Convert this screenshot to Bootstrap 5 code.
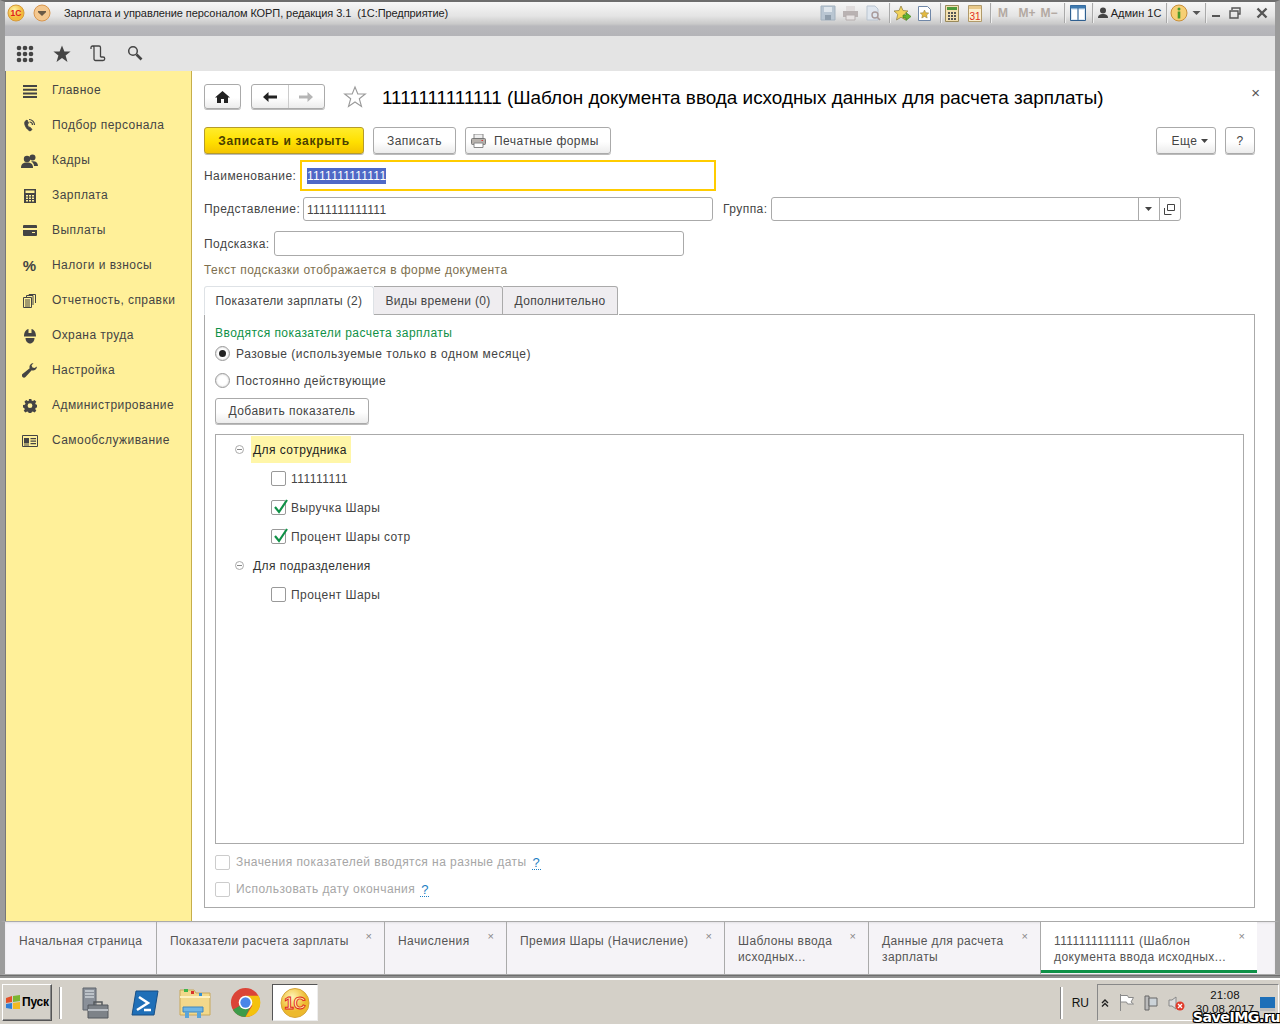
<!DOCTYPE html>
<html lang="ru"><head><meta charset="utf-8"><title>1C</title>
<link href="https://cdn.jsdelivr.net/npm/bootstrap@5.3.0/dist/css/bootstrap.min.css" rel="stylesheet">
<script src="https://cdn.jsdelivr.net/npm/bootstrap@5.3.0/dist/js/bootstrap.bundle.min.js"></script>
<style>
html,body{height:1024px;overflow:hidden;background:#d4d0c8}
body{font:12px/15px "Liberation Sans",Arial,sans-serif;letter-spacing:.45px;color:#444}
.app{height:1024px;position:relative}
.titlebar{height:36px;flex:none;border-top:2px solid #6d6d6d;background:linear-gradient(#f7f7f7 0,#e4e4e4 14px,#c9c9c9 22px,#b9b9bd 24px,#b4b4b8 100%);border-left:5px solid #9a9a9a;border-right:5px solid #9a9a9a}
.titlebar .cap{height:22px;color:#222;font-size:11px;letter-spacing:-.08px;padding-left:59px;white-space:pre}
.logo-wrap{position:absolute;left:7px;top:4px;gap:4px}
.tray{display:grid;grid-template-columns:23px 23px 22px 10px 17px 27px 4px 20px 26px 4px 22px 26px 18px 12px 16px 12px 10px 56px 4px 22px 13px 5px 16px 22px 32px;position:absolute;left:816px;top:2px;height:22px;align-items:center;justify-items:center}
.tray .sp{width:1px;height:20px;background:#a9a9a9;box-shadow:1px 0 #eee}
.tray .m{font-weight:700;font-size:12px;letter-spacing:0;color:#b3a9a2}
.tray .u{font-size:11px;letter-spacing:0;color:#222;white-space:nowrap}
.toolbar{height:35px;flex:none;background:#e4e4e4;border-left:5px solid #9a9a9a;border-right:5px solid #9a9a9a;padding-left:11px;gap:19px}
.nudge{margin-left:2px}
.workspace{flex:1 1 0;min-height:0;border-left:5px solid #9c9c9c;border-right:5px solid #9c9c9c;box-shadow:inset 1px 0 #777}
.side{width:186px;flex:none;background:#fff099;border-right:1px solid #c6ae4b;padding-top:2px;margin-left:1px}
.side .nav-link{height:35px;padding:0;color:#444;display:flex;align-items:center}
.side .ic{width:46px;display:flex;justify-content:center;flex:none;padding-left:1px;font-weight:700;font-size:15px;letter-spacing:0}
.main{flex:1 1 0;min-width:0;background:#fff;padding:13px 20px 13px 12px}
.btn.b1c{--bs-btn-padding-y:0;--bs-btn-padding-x:0;font-size:12px;letter-spacing:.45px;color:#444;border:1px solid #aaa;border-radius:3px;background:linear-gradient(#fff 0,#fff 55%,#ececec 100%);box-shadow:0 1px 0 #bbb;display:inline-flex;align-items:center;justify-content:center;line-height:15px;padding-top:1px}
.btn.yel{background:linear-gradient(#ffec2c 0,#ffe000 55%,#f4c400 100%);border-color:#b59b2b;color:#4b3f00;font-weight:700;letter-spacing:.7px}
.navrow{height:25px}
.home{width:37px;height:25px}
.navgrp{width:74px;height:25px;margin-left:10px}
.navgrp>span{flex:1;height:100%;display:flex;align-items:center;justify-content:center}
.navgrp>span+span{border-left:1px solid #ccc}
.star{margin:0 15px 0 18px;flex:none}
.title{font-size:18.9px;line-height:25px;color:#000;letter-spacing:0;white-space:nowrap;padding-top:1px}
.closex{font-size:15px;line-height:18px;color:#555;letter-spacing:0;margin-left:auto;margin-right:-5px;align-self:flex-start}
.cmd{height:27px;margin-top:18px}
.cmd .btn{height:27px}
.w160{width:160px}.w83{width:83px;margin-left:9px}.w146{width:146px;margin-left:9px;padding-right:6px}.w60{width:60px;margin-left:auto;padding-left:8px}.w30{width:30px;margin-left:9px}
.fld{color:#444;white-space:nowrap;padding-top:1px}
.form-control.i1c{height:24px;border:1px solid #aaa;border-radius:3px;padding:4px 3px 2px;font-size:12px;line-height:16px;letter-spacing:.25px;color:#444;box-shadow:none;background:#fff}
.r1{height:31px;margin-top:6px}
.r1 .fld{width:96px}
.form-control.focus{width:416px;height:31px;border:2px solid #fc0;border-radius:0;padding:6px 5px 4px}
.sel{background:#4f69c6;color:#fff;display:inline-block;height:16px}
.r2{height:24px;margin-top:6px}
.r2 .fld:first-child{width:99px}
.w410{width:410px;flex:none}
.grp-l{margin:0 3px 0 10px}
.grp{width:410px;height:24px;border:1px solid #aaa;border-radius:3px;flex:none}
.grp>div{flex:1}
.grp>span{width:21px;height:100%;border-left:1px solid #aaa;display:flex;align-items:center;justify-content:center}
.r3{height:25px;margin-top:10px}
.r3 .fld{width:70px}
.r3 .form-control.i1c{height:25px}
.hint{margin-top:6px;color:#7d6f4e;height:15px;padding-top:1px;line-height:15px}
.nav-tabs.t1c{margin-top:9px;height:29px;border:0;flex:none;--bs-nav-tabs-border-width:0}
.t1c .nav-link{height:29px;padding:1px 0 0;margin:0;color:#444;letter-spacing:.35px;border:1px solid #aaa;border-left-width:0;border-radius:0 3px 0 0;background:#efedf0;display:flex;align-items:center;justify-content:center}
.t1c .nav-link.active{background:#fff;border-left-width:1px;border-bottom-color:#fff;color:#444;border-radius:3px 3px 0 0;width:170px}
.tw2{width:129px}.tw3{width:115px}
.panel{flex:1 1 0;min-height:0;border:1px solid #aaa;border-top:0;padding:10px 10px 10px;position:relative}
.topline{position:absolute;left:414px;right:-1px;top:-1px;height:1px;background:#aaa}
.green{color:#0f9147;height:15px;padding-top:1px;line-height:15px}
.rad{width:15px;height:15px;border:1px solid #999;border-radius:50%;margin:-2px 6px 0 0;flex:none;display:flex;align-items:center;justify-content:center;box-shadow:inset 0 0 2px #bbb;background:#fff}
.rad i{width:7px;height:7px;border-radius:50%;background:#222}
.radrow{margin-top:6px;height:15px;padding-top:2px;letter-spacing:.52px}.radrow+.radrow{margin-top:12px}
.addbtn.btn{width:154px;height:26px;margin-top:10px;flex:none}
.tree{flex:1 1 0;min-height:0;border:1px solid #aaa;margin-top:10px;padding-left:19px}
.trow{height:29px}
.tg{width:9px;height:9px;border:1px solid #aaa;border-radius:50%;position:relative;margin-right:9px;flex:none}
.tg:after{content:"";position:absolute;left:1px;right:1px;top:3px;height:1px;background:#888}
.node{padding:2px 3px 0 2px;height:27px;display:flex;align-items:center;margin-left:-2px;color:#333;white-space:nowrap}
.node.cur{background:#fff6a8;color:#222;width:100px}
.tchild{padding-left:36px;padding-top:2px}
.tchild .cb{margin-top:-2px}
.cb{width:15px;height:15px;border:1px solid #999;border-radius:2px;margin-right:5px;flex:none;position:relative;background:#fff}
.cb svg{position:absolute;left:1px;top:-3px}
.dis{color:#a6a6a6;height:15px;margin-top:11px}
.dis+.dis{margin-top:12px}
.dis .cb{border-color:#ccc;margin-right:6px}
.q{color:#1d7fc4;border-bottom:1px dotted #1d7fc4;line-height:13px;margin-left:5px;font-size:13px;letter-spacing:0;padding:0 1px}
.opentabs{height:54px;flex:none;background:#f5f3f7;border-left:5px solid #9c9c9c;border-right:5px solid #9c9c9c;border-top:1px solid #aaa;border-bottom:1px solid #aaa;padding-left:1px;box-shadow:inset 0 1px 2px #e3e1e5}
.otab{height:100%;border-right:1px solid #aaa;padding:11px 0 0 13px;position:relative;flex:none;color:#555;line-height:16px;letter-spacing:.4px}
.otab .x{position:absolute;top:6px;right:12px;color:#888;font-size:11px;letter-spacing:0}
.o1{width:151px}.o2{width:228px}.o3{width:122px}.o4{width:218px}.o5{width:144px}.o6{width:172px}
.o7{width:216px;border-right:0;background:#fff;border-bottom:3px solid #0f9147;height:calc(100% - 1px)}
.sep-frame{height:5px;flex:none;background:#8f8f8f;border-bottom:2px solid #fff;border-top:1px solid #6e6e6e}
.taskbar{height:44px;flex:none;background:#d4d0c8;position:relative;padding:4px 0 3px 2px;align-items:center}
.start{width:50px;height:37px;background:#d4d0c8;border:1px solid;border-color:#fff #555 #555 #fff;box-shadow:inset -1px -1px #888;font-weight:700;font-size:12px;letter-spacing:-.2px;color:#000;display:flex;align-items:center;padding-left:2px;gap:1px}
.vsep{width:2px;height:32px;margin:0 8px 0 8px;background:#fff;box-shadow:-1px 0 #888}
.tico{width:50px;display:flex;justify-content:center;flex:none}
.tico.act{width:46px;height:37px;margin-left:2px;background:#fff;border:1px solid;border-color:#555 #eee #eee #555;align-items:center}
.sysr{position:absolute;right:0;top:4px;height:37px;display:flex;align-items:center}
.lang{font-size:12px;letter-spacing:0;color:#111;margin:0 5px 0 0;padding-left:9px;border-left:2px solid #fff;height:32px;line-height:32px;box-shadow:-1px 0 #888}
.trayb{width:182px;height:37px;border:1px solid;border-color:#888 #fff #fff #888;margin-left:3px;position:relative;padding-left:3px;gap:10px;display:flex;align-items:center;margin-right:1px}
.clock{position:absolute;left:91px;top:3px;width:72px;text-align:center;font-size:11.5px;letter-spacing:.1px;color:#111;line-height:14px}
.desk{position:absolute;right:3px;top:12px}
.watermark{position:absolute;right:0;bottom:-2px;font:700 14.2px/18px "DejaVu Sans",sans-serif;letter-spacing:-.5px;color:#fff;text-shadow:-1px 0 #000,1px 0 #000,0 -1px #000,0 1px #000,1px 1px #000,-1px -1px #000,1px -1px #000,-1px 1px #000}
</style></head><body>
<div class="app d-flex flex-column">
 <div class="titlebar">
  <div class="cap d-flex align-items-center">Зарплата и управление персоналом КОРП, редакция 3.1  (1С:Предприятие)</div>
 </div>
 <div class="logo-wrap d-flex">
  <svg width="18" height="18" viewBox="0 0 18 18"><defs><radialGradient id="g" cx=".4" cy=".3"><stop offset="0" stop-color="#fff3a0"/><stop offset="1" stop-color="#f3b93a"/></radialGradient></defs><circle cx="9" cy="9" r="8" fill="url(#g)" stroke="#d69a3a"/><text x="9" y="12" text-anchor="middle" font-family="Liberation Sans" font-weight="700" font-size="8.5" fill="#e0201b" letter-spacing="0">1С</text></svg>
  <svg width="18" height="18" viewBox="0 0 18 18" class="ms-1"><circle cx="9" cy="9" r="8" fill="#f4c88f" stroke="#d8964e"/><path d="M5 7h8v1.200L9 12 5 8.200z" fill="#6a5a45"/></svg>
 </div>
 <div class="tray">
  <svg width="16" height="16" viewBox="0 0 16 16"><path d="M1 1h14v14H1z" fill="#b9c6d2" stroke="#a3b2bf"/><path d="M4 2h8v5H4z" fill="#dfe6ec"/><path d="M5 10h6v5H5z" fill="#8f9eac"/></svg>
  <svg width="17" height="16" viewBox="0 0 17 16"><path d="M4 1h9v5H4z" fill="#e0dcdc"/><path d="M1 6h15v6H1z" fill="#b9b2b2"/><path d="M4 10h9v5H4z" fill="#e6e2e2" stroke="#b5aeae"/></svg>
  <svg width="17" height="16" viewBox="0 0 17 16"><path d="M2 1h8l3 3v11H2z" fill="#dfe6ee" stroke="#b9c4d0"/><circle cx="10" cy="10" r="3" fill="none" stroke="#a89a9a" stroke-width="1.400"/><path d="M12 12l3 3" stroke="#a89a9a" stroke-width="1.600"/></svg>
  <i class="sp"></i>
  <svg width="17" height="17" viewBox="0 0 17 17"><path d="M7 1l2 4.500 5 .5-3.700 3.300L11.500 15 7 12.300 2.500 15l1.200-5.700L0 6l5-.5z" fill="#f3d35a" stroke="#8a7a3a" stroke-width=".7"/><path d="M9 10h3V7.500l5 4-5 4V13H9z" fill="#63b32e" stroke="#3b7a1a" stroke-width=".6"/></svg>
  <svg width="13" height="15" viewBox="0 0 13 15"><path d="M.5.500h9l3 3v11H.5z" fill="#fff" stroke="#6f87a8"/><path d="M6.500 4l1.300 2.700 3 .3-2.200 2 .6 3-2.700-1.500L3.800 12l.6-3-2.200-2 3-.3z" fill="#e3b93f" stroke="#8a7a3a" stroke-width=".5"/></svg>
  <i class="sp"></i>
  <svg width="14" height="17" viewBox="0 0 14 17"><path d="M.5.500h13v16H.5z" fill="#f3e0b0" stroke="#9a8a5a"/><path d="M2 2h10v3H2z" fill="#4e9a3a"/><path d="M3 7h2v2H3zM6 7h2v2H6zM9 7h2v2H9zM3 10h2v2H3zM6 10h2v2H6zM9 10h2v2H9zM3 13h2v2H3zM6 13h2v2H6zM9 13h2v2H9z" fill="#555"/></svg>
  <svg width="14" height="17" viewBox="0 0 14 17"><path d="M.5.500h13v16H.5z" fill="#fbeecf" stroke="#b09a6a"/><path d="M1 1h12v3H1z" fill="#e9c98a"/><text x="7" y="14.500" text-anchor="middle" font-family="Liberation Sans" font-size="10" fill="#e02a1a" letter-spacing="0">31</text></svg>
  <i class="sp"></i>
  <span class="m">M</span><span class="m">M+</span><span class="m">M−</span>
  <i class="sp"></i>
  <svg width="16" height="16" viewBox="0 0 16 16"><path d="M.5.500h15v15H.5z" fill="#dce9f5" stroke="#2f5f8f"/><path d="M.5.500h15v3H.5z" fill="#3f7ab0"/><path d="M2 5h5v9H2zM9 5h5v9H9z" fill="#fff"/><path d="M8 3v12" stroke="#2f5f8f"/></svg>
  <i class="sp"></i>
  <svg width="10" height="12" viewBox="0 0 10 12"><circle cx="5" cy="3.500" r="3" fill="#444"/><path d="M0 11c0-3 2-4 5-4s5 1 5 4z" fill="#444"/></svg>
  <span class="u">Админ 1С</span>
  <i class="sp"></i>
  <svg width="18" height="18" viewBox="0 0 18 18"><circle cx="9" cy="9" r="8" fill="#f6cf73" stroke="#c98f3a"/><circle cx="9" cy="5" r="1.500" fill="#4a9a2a"/><path d="M7.700 7.500h2.600v7H7.700z" fill="#4a9a2a"/></svg>
  <svg width="9" height="8" viewBox="0 0 9 8"><path d="M.5 2h8L4.500 6z" fill="#555"/></svg>
  <i class="sp"></i>
  <svg width="10" height="10" viewBox="0 0 10 10"><path d="M1 7h8v2H1z" fill="#555"/></svg>
  <svg width="12" height="12" viewBox="0 0 12 12"><path d="M3 3V1h8v6H9" fill="none" stroke="#555" stroke-width="1.400"/><path d="M1 4h8v7H1z" fill="none" stroke="#555" stroke-width="1.400"/></svg>
  <svg width="12" height="12" viewBox="0 0 12 12"><path d="M1.500 1.500l9 9M10.500 1.500l-9 9" stroke="#555" stroke-width="2.400"/></svg>
 </div>
 <div class="toolbar d-flex align-items-center">
  <svg width="18" height="18" viewBox="0 0 18 18" fill="#444"><circle cx="3" cy="3" r="2.300"/><circle cx="9" cy="3" r="2.300"/><circle cx="15" cy="3" r="2.300"/><circle cx="3" cy="9" r="2.300"/><circle cx="9" cy="9" r="2.300"/><circle cx="15" cy="9" r="2.300"/><circle cx="3" cy="15" r="2.300"/><circle cx="9" cy="15" r="2.300"/><circle cx="15" cy="15" r="2.300"/></svg>
  <svg width="18" height="18" viewBox="0 0 18 18"><path d="M9 .5l2.400 6h6.200l-5 3.900 1.900 6.500L9 13.100 3.500 16.900l1.900-6.500-5-3.900h6.200z" fill="#444"/></svg>
  <svg width="16" height="17" viewBox="0 0 16 17" fill="none" stroke="#444" stroke-width="1.300"><path d="M1 4V2.500A1.500 1.500 0 0 1 4 2.500V14a1.500 1.500 0 0 0 1.500 1.500H13a1.500 1.500 0 0 0 0-3.500H10.500M2.500 1H9a1.500 1.500 0 0 1 1.500 1.500V12"/></svg>
  <svg class="nudge" width="16" height="17" viewBox="0 0 16 17" fill="none" stroke="#444"><circle cx="6" cy="6" r="4.300" stroke-width="1.500"/><path d="M9.500 9.500l5 5" stroke-width="2.600"/></svg>
 </div>
 <div class="workspace d-flex">
  <nav class="side nav flex-column">
   <a class="nav-link" href="#"><span class="ic"><svg width="14" height="14" viewBox="0 0 14 14" fill="#444"><path d="M0 1h14v2H0zM0 4.700h14v2H0zM0 8.400h14v2H0zM0 12h14v2H0z"/></svg></span>Главное</a>
   <a class="nav-link" href="#"><span class="ic"><svg width="14" height="15" viewBox="0 0 14 15" fill="none" stroke="#444"><path d="M2 3.500C1 6 3 11 7 13l2-1.500L6.700 9l-1 .6C5 8.500 4.500 7 4.500 6l1-.8L4 2z" fill="#444"/><path d="M6 1.500c3 0 5.500 2.500 5.500 5.500M6.500 4c2 0 3 1 3 3" stroke-width="1.200"/></svg></span>Подбор персонала</a>
   <a class="nav-link" href="#"><span class="ic"><svg width="17" height="14" viewBox="0 0 17 14" fill="#444"><circle cx="6" cy="5" r="3.200"/><path d="M0 14c0-4 2-5.500 6-5.500s6 1.500 6 5.500z"/><circle cx="11.500" cy="3.500" r="3"/><path d="M10 7.500c4-1 7 .5 7 4.500h-4c0-2-1-3.500-3-4.500z"/></svg></span>Кадры</a>
   <a class="nav-link" href="#"><span class="ic"><svg width="12" height="14" viewBox="0 0 12 14" fill="#444"><path fill-rule="evenodd" d="M0 0h12v14H0zM1.500 1.500v2.500h9V1.500zM2 6v1.500h2V6zM5 6v1.500h2V6zM8 6v1.500h2V6zM2 8.500V10h2V8.500zM5 8.500V10h2V8.500zM8 8.500V10h2V8.500zM2 11v1.500h2V11zM5 11v1.500h2V11zM8 11v1.500h2V11z"/></svg></span>Зарплата</a>
   <a class="nav-link" href="#"><span class="ic"><svg width="14" height="11" viewBox="0 0 14 11" fill="#444"><path fill-rule="evenodd" d="M1 0h12a1 1 0 0 1 1 1v9a1 1 0 0 1-1 1H1a1 1 0 0 1-1-1V1a1 1 0 0 1 1-1zM0 3v2h14V3zM9 7v1h3V7z"/></svg></span>Выплаты</a>
   <a class="nav-link" href="#"><span class="ic">%</span>Налоги и взносы</a>
   <a class="nav-link" href="#"><span class="ic"><svg width="13" height="14" viewBox="0 0 13 14" fill="none" stroke="#444"><path d="M.5 3.500h8v10h-8zM3.500 3V1.500h6.500V11M6 1V.5h6.500V9M2 6h5M2 8h5M2 10h5M2 12h5"/></svg></span>Отчетность, справки</a>
   <a class="nav-link" href="#"><span class="ic"><svg width="14" height="16" viewBox="0 0 14 16" fill="#444"><path d="M1 8.500C1 4 3 1.500 5.500 1v4h3V1C11 1.500 13 4 13 8.500z"/><path d="M2.500 10h9c0 3-2 5.500-4.500 5.500S2.500 13 2.500 10z"/></svg></span>Охрана труда</a>
   <a class="nav-link" href="#"><span class="ic"><svg width="15" height="15" viewBox="0 0 15 15" fill="#444"><path d="M15 3.500a4 4 0 0 1-5.300 3.800L3.500 14a1.500 1.500 0 0 1-3-3L7.700 5.300A4 4 0 0 1 11.500 0L9.500 2.500 10.500 4.500l2 .5z"/></svg></span>Настройка</a>
   <a class="nav-link" href="#"><span class="ic"><svg width="14" height="14" viewBox="0 0 14 14" fill="#444"><path fill-rule="evenodd" d="M5.700 0h2.600l.3 1.900 1.300.6 1.600-1.100 1.800 1.800-1.100 1.600.6 1.300 1.900.3v2.600l-1.900.3-.6 1.300 1.100 1.600-1.800 1.800-1.600-1.100-1.300.6-.3 1.900H5.700l-.3-1.900-1.300-.6-1.600 1.100L.7 12.300l1.100-1.600-.6-1.300L0 9.100V6.500l1.900-.3.600-1.300L1.400 3.300l1.800-1.800 1.600 1.100 1.300-.6zM7 4.800a2.400 2.400 0 1 0 0 4.800 2.400 2.400 0 0 0 0-4.800z" transform="translate(0 -.5)"/></svg></span>Администрирование</a>
   <a class="nav-link" href="#"><span class="ic"><svg width="16" height="12" viewBox="0 0 16 12" fill="#444"><path d="M.5.500h15v11H.5z" fill="none" stroke="#444"/><path d="M2 3h5v5.500H2zM8.500 3H14v1.300H8.500zM8.500 5.500H14v1.300H8.500zM8.500 8H14v1.300H8.500zM2 9.500h5v1H2z"/></svg></span>Самообслуживание</a>
  </nav>
  <main class="main d-flex flex-column">
   <div class="navrow d-flex align-items-center">
    <span class="btn b1c home"><svg width="15" height="12" viewBox="0 0 15 12" fill="#222"><path d="M7.500 0L15 6.500h-2V12H9V8H6v4H2V6.500H0z"/></svg></span>
    <div class="btn b1c navgrp p-0 d-flex">
     <span><svg width="14" height="10" viewBox="0 0 14 10" fill="#222"><path d="M5.500 0v3.500H14v3H5.500V10L0 5z"/></svg></span>
     <span><svg width="14" height="10" viewBox="0 0 14 10" fill="#b5b5b5"><path d="M8.500 0v3.500H0v3h8.500V10L14 5z"/></svg></span>
    </div>
    <svg class="star" width="24" height="24" viewBox="0 0 24 24"><path d="M12 2l2.800 7h7.500l-6 4.700 2.200 7.800L12 17l-6.500 4.500 2.200-7.800-6-4.700h7.500z" fill="#fff" stroke="#999" stroke-width="1.100"/></svg>
    <div class="title">1111111111111 (Шаблон документа ввода исходных данных для расчета зарплаты)</div>
    <span class="closex">×</span>
   </div>
   <div class="cmd d-flex">
    <button class="btn b1c yel w160">Записать и закрыть</button>
    <button class="btn b1c w83">Записать</button>
    <button class="btn b1c w146"><svg class="me-1" width="15" height="14" viewBox="0 0 15 14"><path d="M3 0h9v5H3z" fill="#eee" stroke="#888"/><rect x="0.500" y="4.500" width="14" height="6" rx="1" fill="#b7b2ad" stroke="#777"/><path d="M3 9h9v4.500H3z" fill="#fff" stroke="#888"/><path d="M10.500 6h1.500v1h-1.500z" fill="#d33"/></svg>&nbsp;Печатные формы</button>
    <button class="btn b1c w60">Еще<svg class="ms-1" width="7" height="4" viewBox="0 0 7 4"><path d="M0 0h7L3.500 4z" fill="#444"/></svg></button>
    <button class="btn b1c w30">?</button>
   </div>
   <div class="r1 d-flex align-items-center">
    <label class="fld">Наименование:</label>
    <div class="form-control i1c focus"><span class="sel">1111111111111</span></div>
   </div>
   <div class="r2 d-flex align-items-center">
    <label class="fld">Представление:</label>
    <input class="form-control i1c w410" value="1111111111111">
    <label class="fld grp-l">Группа:</label>
    <div class="grp d-flex"><div></div><span><svg width="7" height="4" viewBox="0 0 7 4"><path d="M0 0h7L3.500 4z" fill="#444"/></svg></span><span><svg width="11" height="11" viewBox="0 0 11 11" fill="none" stroke="#444"><path d="M3.500 6.500V.5h7v6h-7M.5 4v6.500h7"/></svg></span></div>
   </div>
   <div class="r3 d-flex align-items-center">
    <label class="fld">Подсказка:</label>
    <input class="form-control i1c w410">
   </div>
   <div class="hint">Текст подсказки отображается в форме документа</div>
   <ul class="nav nav-tabs t1c">
    <li class="nav-item"><a class="nav-link active" href="#">Показатели зарплаты (2)</a></li>
    <li class="nav-item"><a class="nav-link tw2" href="#">Виды времени (0)</a></li>
    <li class="nav-item"><a class="nav-link tw3" href="#">Дополнительно</a></li>
   </ul>
   <div class="panel d-flex flex-column">
    <i class="topline"></i>
    <div class="green">Вводятся показатели расчета зарплаты</div>
    <div class="radrow d-flex align-items-center"><span class="rad"><i></i></span>Разовые (используемые только в одном месяце)</div>
    <div class="radrow d-flex align-items-center"><span class="rad"></span>Постоянно действующие</div>
    <button class="btn b1c addbtn">Добавить показатель</button>
    <div class="tree">
     <div class="trow d-flex align-items-center"><i class="tg"></i><span class="node cur">Для сотрудника</span></div>
     <div class="trow tchild d-flex align-items-center"><i class="cb"></i>111111111</div>
     <div class="trow tchild d-flex align-items-center"><i class="cb"><svg width="16" height="16" viewBox="0 0 16 16"><path d="M2 9l4 5L14 2" fill="none" stroke="#0f9147" stroke-width="2.200"/></svg></i>Выручка Шары</div>
     <div class="trow tchild d-flex align-items-center"><i class="cb"><svg width="16" height="16" viewBox="0 0 16 16"><path d="M2 9l4 5L14 2" fill="none" stroke="#0f9147" stroke-width="2.200"/></svg></i>Процент Шары сотр</div>
     <div class="trow d-flex align-items-center"><i class="tg"></i><span class="node">Для подразделения</span></div>
     <div class="trow tchild d-flex align-items-center"><i class="cb"></i>Процент Шары</div>
    </div>
    <div class="dis d-flex align-items-center"><i class="cb"></i>Значения показателей вводятся на разные даты<span class="q">?</span></div>
    <div class="dis d-flex align-items-center"><i class="cb"></i>Использовать дату окончания<span class="q">?</span></div>
   </div>
  </main>
 </div>
 <div class="opentabs d-flex">
  <div class="otab o1">Начальная страница</div>
  <div class="otab o2">Показатели расчета зарплаты<span class="x">×</span></div>
  <div class="otab o3">Начисления<span class="x">×</span></div>
  <div class="otab o4">Премия Шары (Начисление)<span class="x">×</span></div>
  <div class="otab o5">Шаблоны ввода<br>исходных...<span class="x">×</span></div>
  <div class="otab o6">Данные для расчета<br>зарплаты<span class="x">×</span></div>
  <div class="otab o7">1111111111111 (Шаблон<br>документа ввода исходных...<span class="x">×</span></div>
 </div>
 <div class="sep-frame"></div>
 <div class="taskbar d-flex">
  <div class="start"><svg width="16" height="15" viewBox="0 0 16 15"><path d="M1 3l6-2v6l-6 1z" fill="#e2512a"/><path d="M8 1l7-1v6l-7 1z" fill="#7cb52f"/><path d="M1 9l6-1v6l-6-1z" fill="#2f7fd6"/><path d="M8 8l7-1v7l-7 0z" fill="#f2b921"/></svg>Пуск</div>
  <i class="vsep"></i>
  <div class="tico"><svg width="30" height="32" viewBox="0 0 30 32"><path d="M3 1h13v22H3z" fill="#8a9099" stroke="#5f656d"/><path d="M5 4h9M5 7h9M5 10h9" stroke="#cdd2d8" stroke-width="1.500"/><path d="M8 18h20v13H8z" fill="#7d8288" stroke="#55595e"/><path d="M14 18v-3h8v3" fill="none" stroke="#55595e" stroke-width="1.500"/><path d="M8 23h20" stroke="#b9bec4" stroke-width="2"/></svg></div>
  <div class="tico"><svg width="28" height="28" viewBox="0 0 28 28"><path d="M5 2h22l-4 24H1z" fill="#1f6fb8" stroke="#174f86"/><path d="M8 8l9 6-11 7" fill="none" stroke="#fff" stroke-width="2.500"/><path d="M13 21h7" stroke="#fff" stroke-width="2.500"/></svg></div>
  <div class="tico"><svg width="32" height="32" viewBox="0 0 32 32"><path d="M1 3h14l2 3h14v22H1z" fill="#f2d88b" stroke="#c8a85a"/><path d="M1 9h30v2H1z" fill="#fdf0c0"/><path d="M5 2h4v3H5z" fill="#3db54a"/><path d="M12 4h3v3h-3z" fill="#d9312b"/><path d="M20 6h3v3h-3z" fill="#2f8fd6"/><path d="M4 20h20v5H4z" fill="#6fb6e6" stroke="#3f86be"/><path d="M6 25h4v6H6zM18 25h4v6h-4z" fill="#5aa5da"/></svg></div>
  <div class="tico"><svg width="31" height="31" viewBox="0 0 32 32"><circle cx="16" cy="16" r="15" fill="#db4437"/><path d="M16 16L3 23.500A15 15 0 0 0 16 31l7-15z" fill="#3d9b4a"/><path d="M16 9h13.600A15 15 0 0 1 16 31l7-12z" fill="#f4c20d"/><circle cx="16" cy="16" r="7" fill="#fff"/><circle cx="16" cy="16" r="5.300" fill="#4a86e8"/></svg></div>
  <div class="tico act"><svg width="30" height="30" viewBox="0 0 30 30"><defs><radialGradient id="h" cx=".4" cy=".3"><stop offset="0" stop-color="#fff6b8"/><stop offset="1" stop-color="#edb92c"/></radialGradient></defs><ellipse cx="15" cy="15" rx="14" ry="14.500" fill="url(#h)" stroke="#d6a53a"/><text x="15" y="21" text-anchor="middle" font-family="Liberation Sans" font-weight="700" font-size="17" fill="#fff3a0" stroke="#e0201b" stroke-width=".9" letter-spacing="0">1С</text></svg></div>
  <div class="sysr">
   <span class="lang">RU</span>
   <div class="trayb">
    <svg width="8" height="8" viewBox="0 0 8 8" fill="none" stroke="#222" stroke-width="1.400"><path d="M1 4l3-3 3 3M1 7.500l3-3 3 3"/></svg>
    <svg width="15" height="17" viewBox="0 0 15 17" fill="#fff" stroke="#8a8a8a"><path d="M1.500 0v17M1.500 1.500h7l1 2h5L12 8l2.500 2h-6l-1-2H1.500z"/></svg>
    <svg width="14" height="16" viewBox="0 0 14 16"><path d="M1 1h4v14H1z" fill="#bbb" stroke="#666"/><path d="M5 3h8v8H5z" fill="#ccd3d8" stroke="#666"/></svg>
    <svg width="17" height="16" viewBox="0 0 17 16"><path d="M1 5h3l4-3v12l-4-3H1z" fill="#ddd" stroke="#888"/><circle cx="12" cy="11" r="4.500" fill="#e03a2a"/><path d="M10 9l4 4M14 9l-4 4" stroke="#fff" stroke-width="1.300"/></svg>
    <div class="clock">21:08<br>30.08.2017</div>
    <svg class="desk" width="15" height="14" viewBox="0 0 15 14"><path d="M0 0h15v14H0z" fill="#1d6fb8"/><path d="M0 11h15v3H0z" fill="#bbb"/></svg>
   </div>
  </div>
  <div class="watermark">SaveIMG.ru</div>
 </div>
</div>
</body></html>
